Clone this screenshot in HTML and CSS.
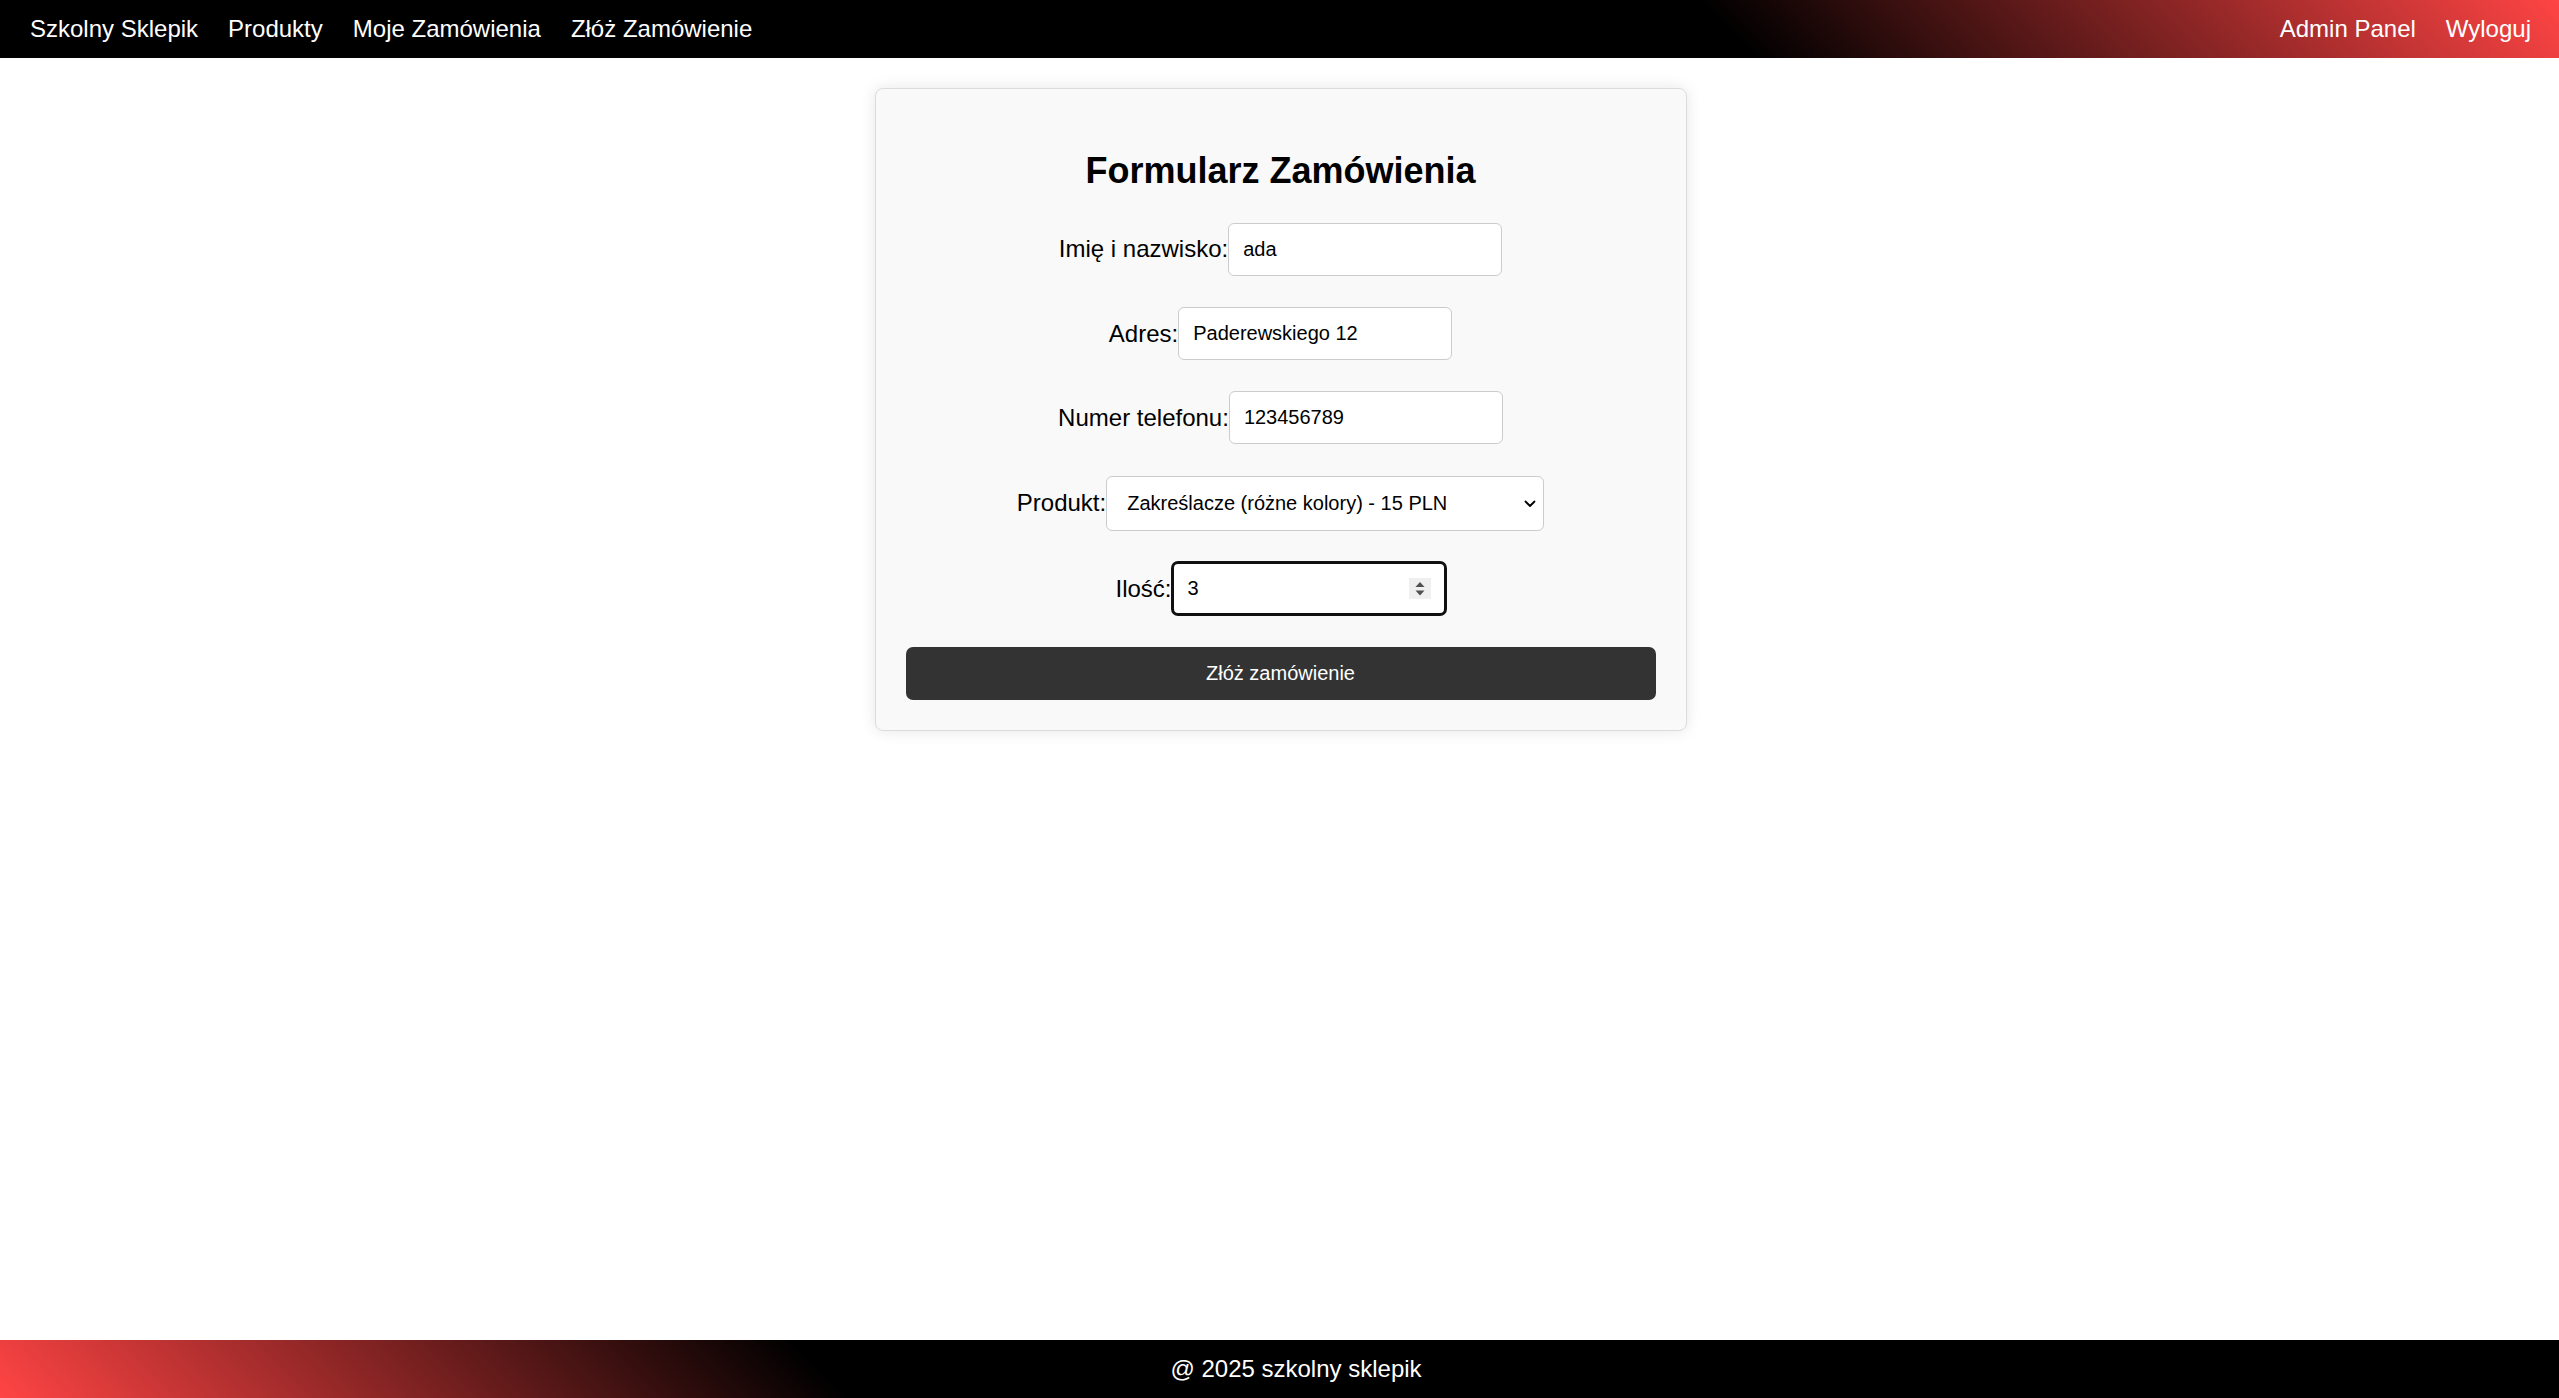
FILE: index.html
```html
<!DOCTYPE html>
<html lang="pl">
<head>
<meta charset="utf-8">
<title>Formularz Zamówienia</title>
<link rel="stylesheet" href="styles.css">
</head>
<body>
<nav class="topbar">
  <div class="nav-group">
    <a class="nav-link" href="#">Szkolny Sklepik</a>
    <a class="nav-link" href="#">Produkty</a>
    <a class="nav-link" href="#">Moje Zamówienia</a>
    <a class="nav-link" href="#">Złóż Zamówienie</a>
  </div>
  <div class="nav-group">
    <a class="nav-link" href="#">Admin Panel</a>
    <a class="nav-link" href="#">Wyloguj</a>
  </div>
</nav>
<main class="content">
  <section class="card">
    <h2 class="card-title">Formularz Zamówienia</h2>
    <form class="order-form">
      <div class="field">
        <label class="field-label" for="name">Imię i nazwisko:</label><input class="field-input" id="name" type="text" value="ada">
      </div>
      <div class="field">
        <label class="field-label" for="addr">Adres:</label><input class="field-input" id="addr" type="text" value="Paderewskiego 12">
      </div>
      <div class="field">
        <label class="field-label" for="phone">Numer telefonu:</label><input class="field-input" id="phone" type="text" value="123456789">
      </div>
      <div class="field">
        <label class="field-label" for="prod">Produkt:</label>
        <div class="select-wrap">
          <select class="field-select" id="prod">
            <option>Zakreślacze (różne kolory) - 15 PLN</option>
          </select>
          <svg class="chevron" width="12" height="8" viewBox="0 0 12 8" aria-hidden="true"><path d="M1.5 1.5 L6 6 L10.5 1.5" fill="none" stroke="#000" stroke-width="1.8" stroke-linecap="round" stroke-linejoin="round"/></svg>
        </div>
      </div>
      <div class="field">
        <label class="field-label" for="qty">Ilość:</label>
        <div class="qty-box">
          <input class="qty-input" id="qty" type="text" value="3">
          <span class="spin">
            <svg width="22" height="21" viewBox="0 0 22 21" aria-hidden="true"><path d="M6.5 9 L11 4 L15.5 9 Z" fill="#505050"/><path d="M6.5 12.5 L11 17.5 L15.5 12.5 Z" fill="#505050"/></svg>
          </span>
        </div>
      </div>
      <button class="submit-btn" type="button">Złóż zamówienie</button>
    </form>
  </section>
</main>
<footer class="footer">@ 2025 szkolny sklepik</footer>
</body>
</html>
```

FILE: styles.css
```css
* {
  box-sizing: border-box;
}

html,
body {
  margin: 0;
  padding: 0;
}

body {
  font-family: "Liberation Sans", Arial, sans-serif;
  background: #ffffff;
  color: #000000;
  min-height: 100vh;
  display: flex;
  flex-direction: column;
}

/* ---------- top navigation ---------- */
.topbar {
  display: flex;
  justify-content: space-between;
  align-items: center;
  padding: 15px 28px 15px 30px;
  background: linear-gradient(45deg, #000000 67%, #ff4444 100%);
}

.nav-group {
  display: flex;
  gap: 30px;
}

.nav-link {
  color: #ffffff;
  text-decoration: none;
  font-size: 24px;
  line-height: 27.6px;
}

/* ---------- main content ---------- */
.content {
  flex: 1;
  display: flex;
  justify-content: center;
  align-items: flex-start;
  padding: 30px 0 0 2px;
}

.card {
  width: 812px;
  background: #f9f9f9;
  border: 1px solid #dcdcdc;
  border-radius: 8px;
  box-shadow: 0 0 15px rgba(0, 0, 0, 0.1);
  padding: 30px;
}

.card-title {
  margin: 31px 0 32px;
  font-size: 36px;
  line-height: 41px;
  font-weight: bold;
  text-align: center;
}

.order-form {
  display: flex;
  flex-direction: column;
  gap: 31.4px;
}

.field {
  display: flex;
  justify-content: center;
  align-items: center;
}

.field-label {
  font-size: 24px;
  line-height: 27.6px;
}

.field-input {
  width: 274px;
  height: 53px;
  border: 1px solid #cccccc;
  border-radius: 6px;
  padding: 0 14px;
  margin: 0;
  font: 20px "Liberation Sans", Arial, sans-serif;
  color: #000000;
  background: #ffffff;
  outline: none;
}

.select-wrap {
  position: relative;
  display: flex;
}

.field-select {
  -webkit-appearance: none;
  appearance: none;
  width: 438px;
  height: 55px;
  border: 1px solid #cccccc;
  border-radius: 6px;
  padding: 0 40px 0 20px;
  margin: 0;
  font: 20px "Liberation Sans", Arial, sans-serif;
  color: #000000;
  background: #ffffff;
  outline: none;
}

.chevron {
  position: absolute;
  right: 8px;
  top: 24px;
  pointer-events: none;
}

.qty-box {
  display: flex;
  align-items: center;
  width: 274px;
  height: 53px;
  border: 2px solid #101010;
  border-radius: 6px;
  box-shadow: 0 0 0 1px #101010;
  background: #ffffff;
  padding: 0 13px 0 14px;
}

.qty-input {
  flex: 1;
  min-width: 0;
  border: none;
  padding: 0;
  margin: 0;
  font: 20px "Liberation Sans", Arial, sans-serif;
  color: #000000;
  background: transparent;
  outline: none;
}

.spin {
  display: flex;
  width: 22px;
  height: 21px;
  background: #efefef;
}

.submit-btn {
  width: 100%;
  height: 53px;
  border: none;
  border-radius: 7px;
  background: #333333;
  color: #ffffff;
  font: 20px "Liberation Sans", Arial, sans-serif;
  padding: 0;
  margin: 0;
  cursor: pointer;
}

/* ---------- footer ---------- */
.footer {
  padding: 15px 0 15px 33px;
  text-align: center;
  font-size: 24px;
  line-height: 27.6px;
  color: #ffffff;
  background: linear-gradient(45deg, #ff4444 0%, #000000 32.5%);
}
```
